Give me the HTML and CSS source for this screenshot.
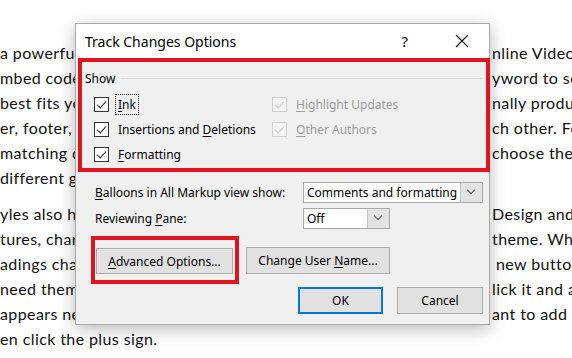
FILE: index.html
```html
<!DOCTYPE html>
<html lang="en">
<head>
    <meta charset="UTF-8">
    <title>Track Changes Options</title>
    <link rel="stylesheet" href="styles.css">
</head>
<body>
    <div class="doc">
        <div class="para">
            <div class="line"><span class="l">a powerful way to help</span><span class="r">nline Video</span></div>
            <div class="line"><span class="l">mbed code for the</span><span class="r">yword to se</span></div>
            <div class="line"><span class="l">best fits your doc</span><span class="r">nally produ</span></div>
            <div class="line"><span class="l">er, footer, cover</span><span class="r">ch other. Fo</span></div>
            <div class="line"><span class="l">matching cover</span><span class="r">choose the</span></div>
            <div class="line"><span class="l">different galleries.</span><span class="r"></span></div>
        </div>
        <div class="para">
            <div class="line"><span class="l">yles also help</span><span class="r">Design and</span></div>
            <div class="line"><span class="l">tures, charts</span><span class="r">theme. Wh</span></div>
            <div class="line"><span class="l">adings change</span><span class="r gap">new butto</span></div>
            <div class="line"><span class="l">need them. To</span><span class="r">lick it and a</span></div>
            <div class="line"><span class="l">appears next</span><span class="r">ant to add</span></div>
            <div class="line"><span class="l">en click the plus sign.</span><span class="r"></span></div>
        </div>
    </div>

    <div class="dialog">
        <div class="titlebar">
            <span class="title">Track Changes Options</span>
            <span class="help">?</span>
            <span class="close">
                <svg width="14" height="14" viewBox="0 0 14 14"><path d="M1 1L13 13M13 1L1 13" stroke="#111" stroke-width="1.1" fill="none"/></svg>
            </span>
        </div>

        <div class="body">
            <div class="mark show-group">
                <div class="group-head"><span>Show</span><span class="rule"></span></div>
                <div class="opts">
                    <div class="opt"><span class="box on"></span><span class="focus"><u>I</u>nk</span></div>
                    <div class="opt off"><span class="box on"></span><span><u>H</u>ighlight Updates</span></div>
                    <div class="opt"><span class="box on"></span><span>Insertions and <u>D</u>eletions</span></div>
                    <div class="opt off"><span class="box on"></span><span><u>O</u>ther Authors</span></div>
                    <div class="opt"><span class="box on"></span><span><u>F</u>ormatting</span></div>
                </div>
            </div>

            <div class="field">
                <span class="label"><u>B</u>alloons in All Markup view show:</span>
                <div class="select wide"><span class="value">Comments and formatting</span><span class="drop"></span></div>
            </div>
            <div class="field">
                <span class="label">Reviewing <u>P</u>ane:</span>
                <div class="select narrow"><span class="value">Off</span><span class="drop"></span></div>
            </div>

            <div class="btn-row">
                <div class="mark adv-mark">
                    <button class="btn adv"><u>A</u>dvanced Options...</button>
                </div>
                <button class="btn user">Change User <u>N</u>ame...</button>
            </div>

            <div class="actions">
                <button class="btn ok">OK</button>
                <button class="btn cancel">Cancel</button>
            </div>
        </div>
    </div>
</body>
</html>
```

FILE: styles.css
```css
html, body {
    margin: 0;
    height: 100%;
    overflow: hidden;
    background: #fff;
}
.doc {
    font-family: Lato, "Liberation Sans", sans-serif;
    font-size: 16px;
    letter-spacing: 0.4px;
    color: #111;
    padding-top: 40px;
}
.para {
    margin-bottom: 11px;
}
.line {
    display: flex;
    height: 25px;
    line-height: 25px;
    white-space: nowrap;
}
.l {
    flex: 0 0 492px;
    overflow: hidden;
}
.r {
    overflow: hidden;
}
.r.gap {
    padding-left: 4px;
}

/* dialog */
.dialog {
    position: absolute;
    left: 75px;
    top: 23px;
    width: 413px;
    height: 300px;
    border: 1px solid #a9a9a9;
    background: #f0f0f0;
    box-shadow: 0 4px 16px rgba(0, 0, 0, 0.28);
    font-family: "Noto Sans", "Open Sans", sans-serif;
    font-size: 12px;
    color: #000;
}
.titlebar {
    height: 34px;
    background: #fff;
    display: flex;
    align-items: center;
    padding-left: 9px;
}
.title {
    font-size: 14px;
    flex: 1;
}
.help {
    font-size: 15px;
    margin-right: 47px;
}
.close {
    display: flex;
    margin-right: 20px;
}
u {
    text-decoration-thickness: 1px;
    text-underline-offset: 2px;
}

.mark {
    border: 4px solid #e0141e;
}
.show-group {
    margin: 0 -1px 0 2px;
    height: 106px;
    padding: 0 4px 0 3px;
}
.group-head {
    display: flex;
    align-items: center;
    height: 16px;
    margin-top: 8px;
}
.rule {
    flex: 1;
    border-top: 1px solid #dcdcdc;
    margin: 0 0 0 6px;
}
.opts {
    margin-top: 6px;
    padding-left: 9px;
    display: grid;
    grid-template-columns: 178px 1fr;
}
.opt {
    display: flex;
    align-items: center;
    height: 25px;
    gap: 9px;
}
.box {
    width: 13px;
    height: 13px;
    border: 1px solid #333;
    background: #fff;
    position: relative;
}
.box.on::after {
    content: "";
    position: absolute;
    left: 4px;
    top: 1px;
    width: 4px;
    height: 8px;
    border: solid #222;
    border-width: 0 1px 1px 0;
    transform: rotate(42deg);
}
.off {
    color: #9c9c9c;
}
.off .box {
    border-color: #cfcfcf;
    background: #f4f4f4;
}
.off .box.on::after {
    border-color: #c8c8c8;
}
.focus {
    outline: 1px dotted #222;
    padding: 1px 2px;
    margin-left: -2px;
}

.field {
    display: flex;
    align-items: center;
    margin: 10px 0 0 19px;
    height: 21px;
}
.field + .field {
    margin-top: 5px;
}
.label {
    width: 208px;
}
.select {
    display: flex;
    height: 19px;
    border: 1px solid #a8a8a8;
    background: #fff;
}
.wide { width: 178px; }
.narrow { width: 85px; }
.value {
    flex: 1;
    padding-left: 3px;
    line-height: 19px;
    overflow: hidden;
    white-space: nowrap;
}
.drop {
    width: 21px;
    background: #e3e3e3;
    border-left: 1px solid #c4c4c4;
    position: relative;
}
.drop::after {
    content: "";
    position: absolute;
    left: 7px;
    top: 4px;
    width: 5px;
    height: 5px;
    border: solid #555;
    border-width: 0 1px 1px 0;
    transform: rotate(45deg);
}

.btn-row {
    display: flex;
    align-items: flex-start;
    margin: 7px 0 0 15px;
}
.adv-mark {
    padding: 8px 2px 6px 1px;
}
.btn {
    font: inherit;
    color: #000;
    background: #e1e1e1;
    border: 1px solid #adadad;
    padding: 0;
    margin: 0;
}
.adv {
    width: 137px;
    height: 26px;
}
.user {
    width: 144px;
    height: 27px;
    margin: 11px 0 0 7px;
}
.actions {
    display: flex;
    justify-content: flex-end;
    gap: 14px;
    margin: 3px 6px 0 0;
}
.ok, .cancel {
    height: 27px;
}
.ok {
    width: 85px;
    border: 2px solid #0078d7;
}
.cancel {
    width: 86px;
}
```
